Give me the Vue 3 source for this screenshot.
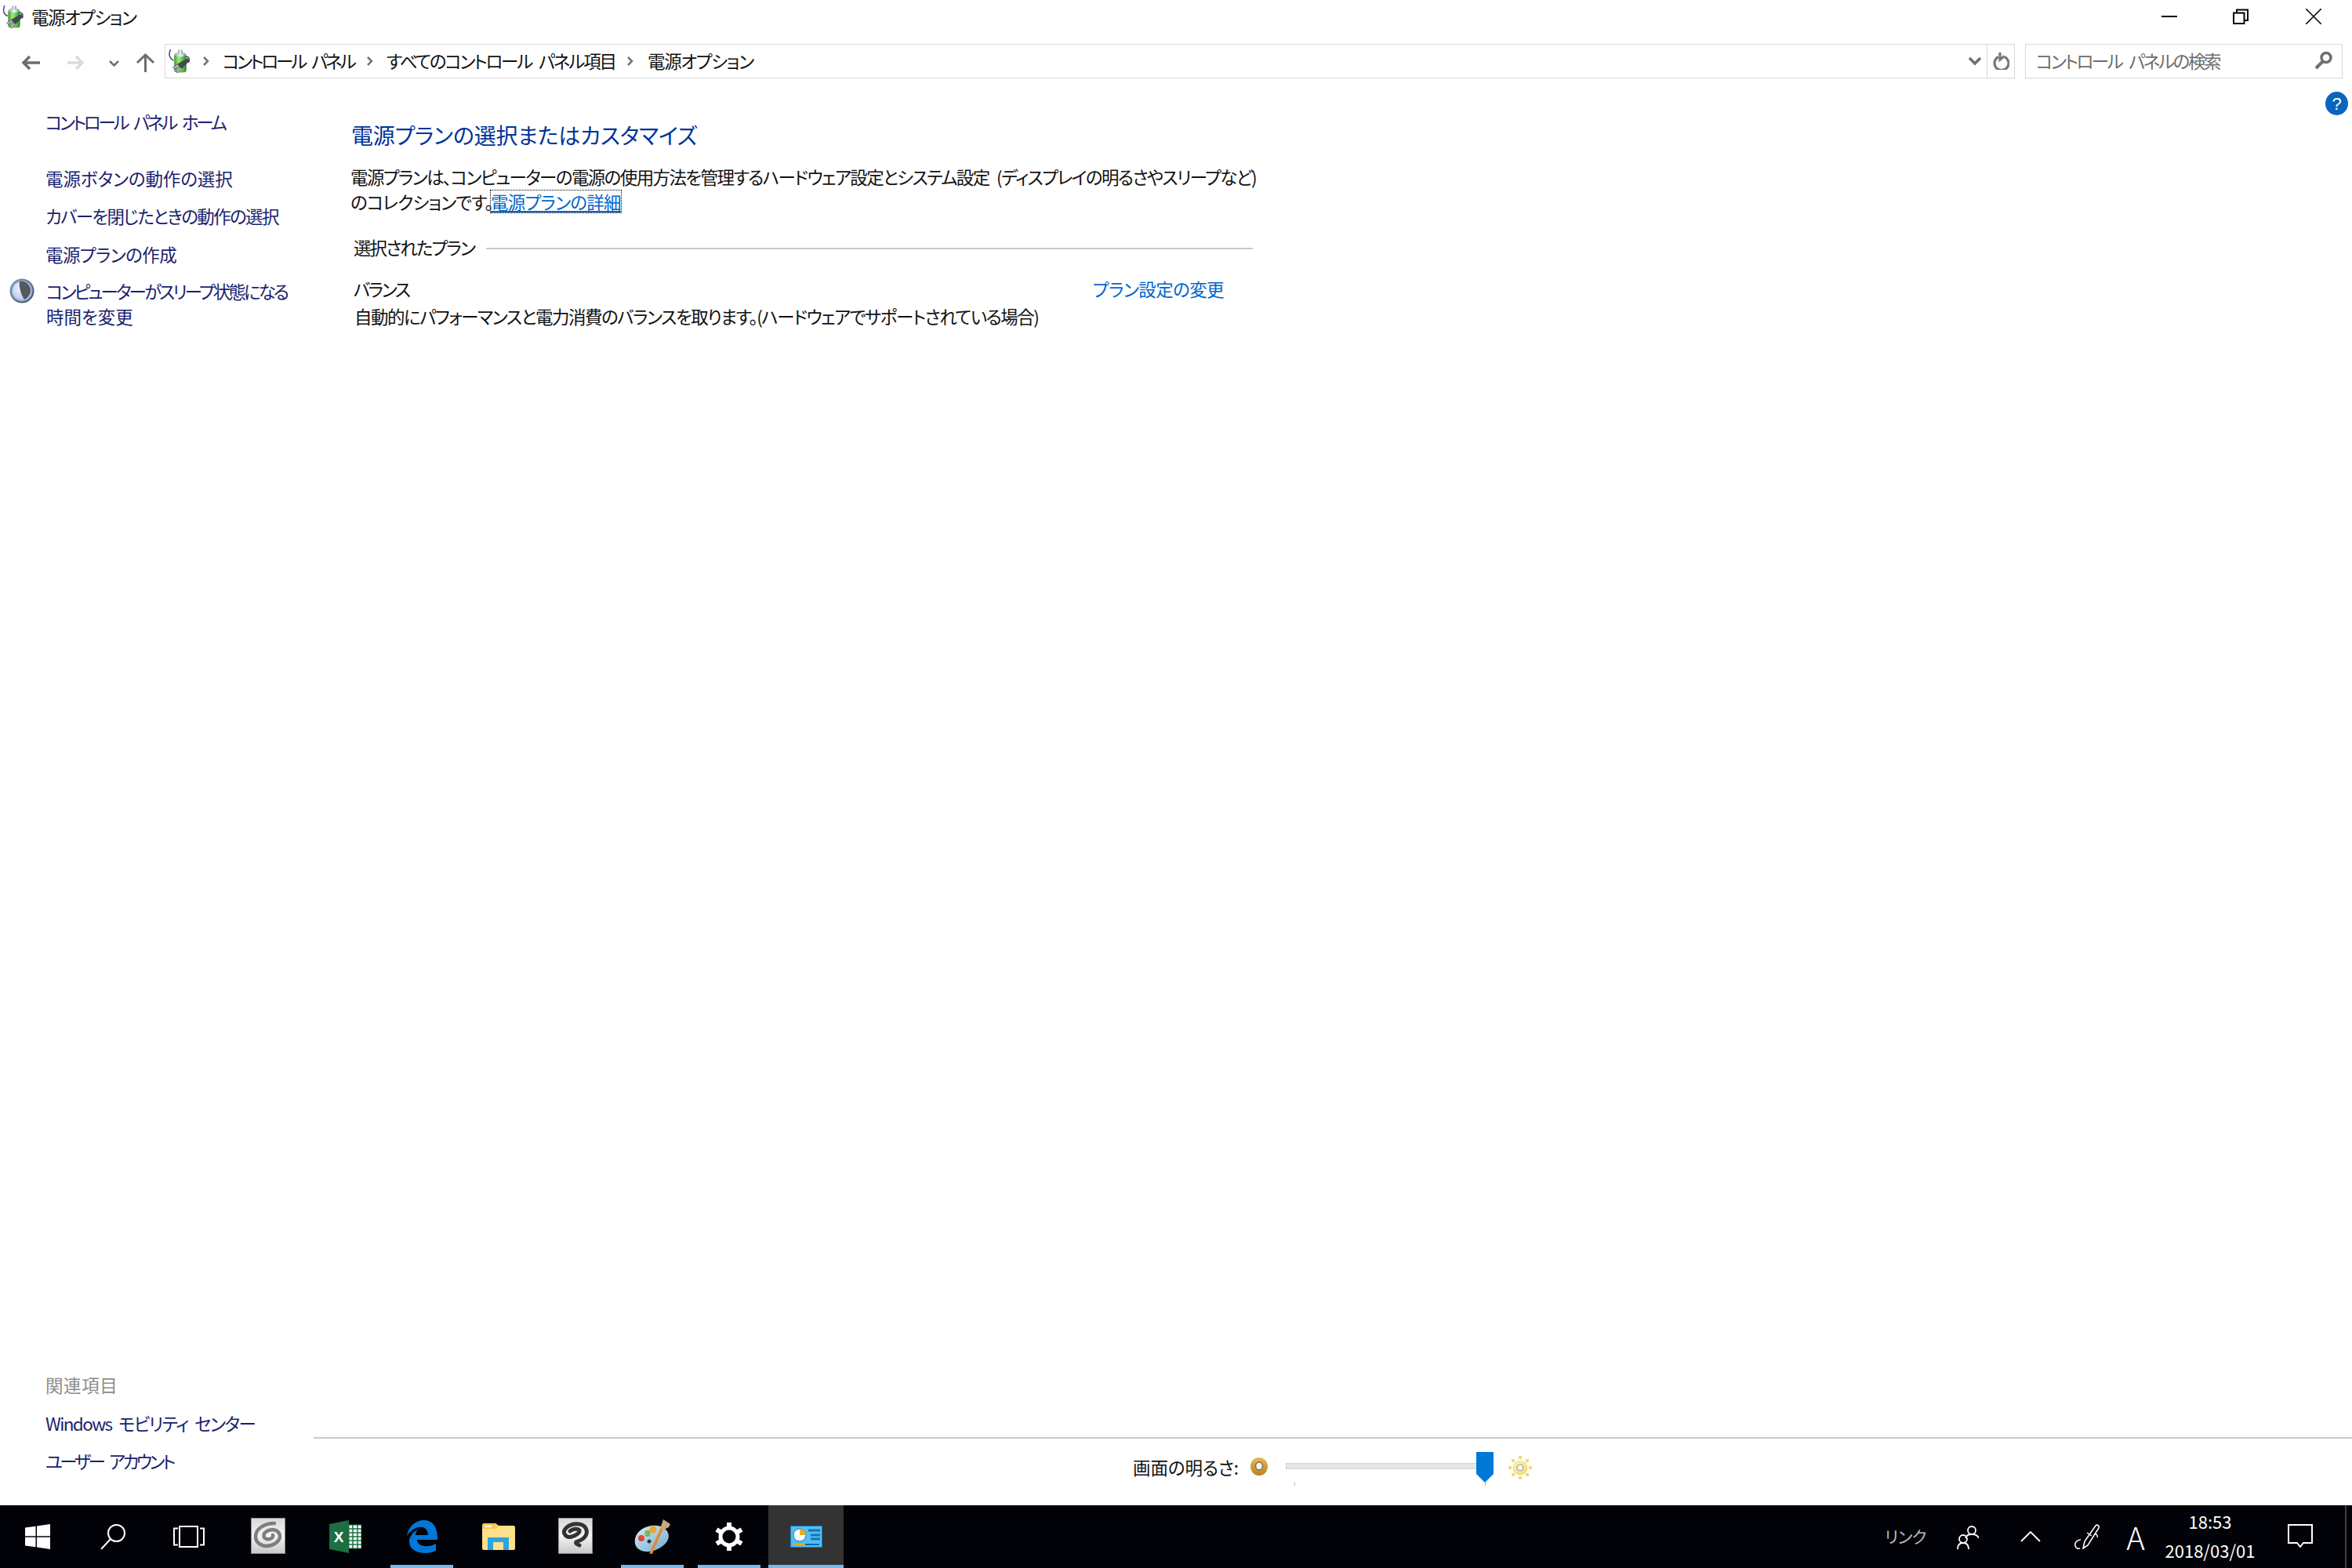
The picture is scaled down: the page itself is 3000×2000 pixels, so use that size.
<script setup>
</script>

<template>
  <div class="page">
    <svg class="defs" width="0" height="0">
      <defs>
        <linearGradient id="batt" x1="0" x2="1" y1="0" y2="0">
          <stop offset="0" stop-color="#3f9e36" />
          <stop offset=".35" stop-color="#a5ec7c" />
          <stop offset=".7" stop-color="#57c548" />
          <stop offset="1" stop-color="#2b8a2d" />
        </linearGradient>
        <linearGradient id="cap" x1="0" x2="1" y1="0" y2="0">
          <stop offset="0" stop-color="#8c9aa0" />
          <stop offset=".5" stop-color="#f2f6f7" />
          <stop offset="1" stop-color="#7f8e94" />
        </linearGradient>
        <linearGradient id="tile" x1="0" x2="0" y1="0" y2="1">
          <stop offset="0" stop-color="#d8d8d8" />
          <stop offset=".5" stop-color="#f4f4f4" />
          <stop offset="1" stop-color="#c8c8c8" />
        </linearGradient>
        <radialGradient id="moon" cx=".4" cy=".4" r=".7">
          <stop offset="0" stop-color="#f0f2ff" />
          <stop offset="1" stop-color="#a9b8e8" />
        </radialGradient>
        <linearGradient id="ring" x1="0" x2="1" y1="0" y2="1">
          <stop offset="0" stop-color="#9aa0a6" />
          <stop offset="1" stop-color="#3f4246" />
        </linearGradient>
        <radialGradient id="sun" cx=".45" cy=".4" r=".7">
          <stop offset="0" stop-color="#fffbe0" />
          <stop offset="1" stop-color="#efd25e" />
        </radialGradient>
        <linearGradient id="dimg" x1="0" x2="0" y1="0" y2="1">
          <stop offset="0" stop-color="#e6b95a" />
          <stop offset="1" stop-color="#b98325" />
        </linearGradient>
        <linearGradient id="pal" x1="0" x2="1" y1="0" y2="1">
          <stop offset="0" stop-color="#d9eef8" />
          <stop offset="1" stop-color="#6ea8cf" />
        </linearGradient>
        <symbol id="power" viewBox="0 0 30 32">
          <path d="M3 1C0 8 2 13 7 15" fill="none" stroke="#4c4c78" stroke-width="1.6" />
          <path d="M22 10C27 10 28 14 26 18" fill="none" stroke="#4c4c78" stroke-width="1.6" />
          <rect x="8" y="7" width="15" height="23" rx="3" fill="url(#batt)" stroke="#2d7f2c" stroke-width=".6" />
          <ellipse cx="15.5" cy="7.5" rx="7.5" ry="3" fill="url(#cap)" />
          <rect x="12.500" y="1" width="6" height="6" rx="2" fill="url(#cap)" />
          <path d="M25 12 27 16 17 26 11 20Z" fill="#44484d" />
          <path d="M12 20 6 24 8 26 14 23M15 24 10 29 12 31 17 26" fill="#b8bcc0" stroke="#3b3e42" stroke-width=".7" />
        </symbol>
        <symbol id="clip" viewBox="0 0 44 46">
          <rect x=".5" y=".5" width="43" height="45" fill="url(#tile)" stroke="#8c8c8c" />
        </symbol>
      </defs>
    </svg>

    <header class="titlebar">
      <svg class="t-icon"><use href="#power" /></svg>
      <span class="t-text">電源オプション</span>
      <div class="winctl">
        <svg class="w-btn" viewBox="0 0 20 20"><path d="M0 10H20" stroke="#000" stroke-width="2" /></svg>
        <svg class="w-btn w-restore" viewBox="0 0 20 20">
          <path d="M1 5.500H14.500V19H1Z M5 5V1.500H19V15H15" fill="none" stroke="#000" stroke-width="2" />
        </svg>
        <svg class="w-btn w-close" viewBox="0 0 20 20"><path d="M0 0 20 20M20 0 0 20" stroke="#000" stroke-width="1.500" /></svg>
      </div>
    </header>

    <nav class="navbar">
      <svg class="n-back" viewBox="0 0 24 20"><path d="M24 10H4M11 2 3 10l8 8" fill="none" stroke="#6d6d6d" stroke-width="3.500" /></svg>
      <svg class="n-fwd" viewBox="0 0 22 20"><path d="M0 10H18M11 2l8 8-8 8" fill="none" stroke="#dcdcdc" stroke-width="3.500" /></svg>
      <svg class="n-drop" viewBox="0 0 13 8"><path d="M1 1 6.500 6.500 12 1" fill="none" stroke="#707070" stroke-width="2.500" /></svg>
      <svg class="n-up" viewBox="0 0 25 24"><path d="M12.500 24V3M2 12 12.500 2 23 12" fill="none" stroke="#6d6d6d" stroke-width="3" /></svg>
      <div class="addr">
        <svg class="a-icon"><use href="#power" /></svg>
        <svg class="crumb-sep first" viewBox="0 0 10 12"><path d="M2 1l5 5-5 5" fill="none" stroke="#757575" stroke-width="2.500" /></svg>
        <span class="crumb c1">コントロール パネル</span>
        <svg class="crumb-sep" viewBox="0 0 10 12"><path d="M2 1l5 5-5 5" fill="none" stroke="#757575" stroke-width="2.500" /></svg>
        <span class="crumb c2">すべてのコントロール パネル項目</span>
        <svg class="crumb-sep" viewBox="0 0 10 12"><path d="M2 1l5 5-5 5" fill="none" stroke="#757575" stroke-width="2.500" /></svg>
        <span class="crumb c3">電源オプション</span>
        <svg class="a-drop" viewBox="0 0 18 12"><path d="M2 2l7 7 7-7" fill="none" stroke="#707070" stroke-width="3.500" /></svg>
        <div class="a-refresh">
          <svg viewBox="0 0 21 22"><path d="M7 5.500A9 9 0 1 0 15 5.500M9 0v9L14.500 4.500" fill="none" stroke="#777" stroke-width="3.200" /></svg>
        </div>
      </div>
      <div class="searchbox">
        <span class="s-text">コントロール パネルの検索</span>
        <svg viewBox="0 0 23 24"><circle cx="15" cy="8.500" r="6" fill="none" stroke="#6f6f6f" stroke-width="3.500" /><path d="M10.500 13.500 2 22" stroke="#6f6f6f" stroke-width="4" /></svg>
      </div>
    </nav>

    <div class="content">
      <aside class="side">
        <a class="lnk home">コントロール パネル ホーム</a>
        <a class="lnk l1">電源ボタンの動作の選択</a>
        <a class="lnk l2">カバーを閉じたときの動作の選択</a>
        <a class="lnk l3">電源プランの作成</a>
        <div class="sleep">
          <svg viewBox="0 0 32 32">
            <circle cx="16" cy="16" r="15.500" fill="url(#ring)" />
            <circle cx="16" cy="16" r="13" fill="url(#moon)" stroke="#6fa2d6" stroke-width="1.500" />
            <path d="M13 4A12 12 0 0 1 27 17C26 22 22 26 19 27 15 21 12 12 13 4Z" fill="#55585c" />
          </svg>
          <a class="lnk"><span class="l4">コンピューターがスリープ状態になる</span><br />時間を変更</a>
        </div>
        <div class="grow"></div>
        <div class="rel">関連項目</div>
        <a class="lnk l5">Windows モビリティ センター</a>
        <a class="lnk l6">ユーザー アカウント</a>
      </aside>

      <main class="main">
        <svg class="help" viewBox="0 0 29 30">
          <ellipse cx="14.500" cy="15" rx="14.500" ry="15" fill="#0a66bd" />
          <text x="14.500" y="23" text-anchor="middle" font-size="22" fill="#fff" font-family="Liberation Sans, sans-serif">?</text>
        </svg>
        <div class="top">
          <h1 class="head">電源プランの選択またはカスタマイズ</h1>
          <p class="para">
            <span class="p1">電源プランは、コンピューターの電源の使用方法を管理するハードウェア設定とシステム設定 (ディスプレイの明るさやスリープなど)</span><br />
            <span class="p2">のコレクションです。</span><a class="detail">電源プランの詳細</a>
          </p>
          <div class="group">
            <span class="g-label">選択されたプラン</span>
            <div class="g-line"></div>
          </div>
          <div class="plan">
            <span class="p-name">バランス</span>
            <a class="p-change">プラン設定の変更</a>
          </div>
          <div class="p-desc">自動的にパフォーマンスと電力消費のバランスを取ります。(ハードウェアでサポートされている場合)</div>
        </div>
        <div class="bright">
          <span class="b-label">画面の明るさ:</span>
          <svg class="b-dim" viewBox="0 0 22 23">
            <ellipse cx="11" cy="11.500" rx="11" ry="11.500" fill="url(#dimg)" />
            <ellipse cx="11" cy="11" rx="4.500" ry="5" fill="#f4f4f2" stroke="#7d6a45" stroke-width="1.500" />
          </svg>
          <div class="slider">
            <div class="track"></div>
            <svg class="thumb" viewBox="0 0 22 39"><path d="M0 0H22V28L11 39 0 28Z" fill="#0078d7" /></svg>
            <i class="tick t1"></i>
            <i class="tick t2"></i>
          </div>
          <svg class="b-sun" viewBox="0 0 32 32">
            <g fill="#f1d96b">
              <circle cx="16" cy="3" r="2.200" /><circle cx="16" cy="29" r="2.200" />
              <circle cx="3" cy="16" r="2.200" /><circle cx="29" cy="16" r="2.200" />
              <circle cx="7" cy="7" r="2.200" /><circle cx="25" cy="7" r="2.200" />
              <circle cx="7" cy="25" r="2.200" /><circle cx="25" cy="25" r="2.200" />
            </g>
            <circle cx="16" cy="16" r="9.500" fill="url(#sun)" />
            <circle cx="16" cy="16" r="4" fill="#f6f4e8" stroke="#9d9d8b" stroke-width="1.200" />
          </svg>
        </div>
      </main>
    </div>

    <footer class="taskbar">
      <div class="tb tb96">
        <svg class="i-win" viewBox="0 0 32 32"><path d="M0 4.500 13.500 2.800V15.300H0ZM15 2.600 32 0V15.300H15ZM0 16.800H13.500V29.200L0 27.500ZM15 16.800H32V32L15 29.400Z" fill="#fff" /></svg>
      </div>
      <div class="tb tb96">
        <svg class="i-search" viewBox="0 0 32 32"><circle cx="20.500" cy="11.500" r="10.500" fill="none" stroke="#fff" stroke-width="2" /><path d="M13 19 1 32" stroke="#fff" stroke-width="2" /></svg>
      </div>
      <div class="tb tb-task">
        <svg class="i-task" viewBox="0 0 40 28"><path d="M8 1H31V27H8ZM6 3.500H1V24.500H6M34 3.500H39V24.500H34" fill="none" stroke="#fff" stroke-width="2" /></svg>
      </div>
      <div class="tb">
        <svg class="i-clip" viewBox="0 0 44 46">
          <use href="#clip" />
          <path d="M30 7C17 7 6 14 6 24c0 9 10 14 20 11 9-3 13-10 10-15-3-6-12-6-17-2-4 3-3 8 1 9 5 1 9-2 8-5" fill="none" stroke="#7e7e7e" stroke-width="4.500" stroke-linecap="round" />
        </svg>
      </div>
      <div class="tb">
        <svg class="i-xl" viewBox="0 0 41 42">
          <path d="M0 5 25 0V42L0 37Z" fill="#1d6f42" />
          <path d="M25 6H41V36H25Z" fill="#fff" stroke="#1d6f42" stroke-width="1" />
          <path d="M30 6V36M36 6V36M25 11H41M25 16H41M25 21H41M25 26H41M25 31H41" stroke="#1d6f42" stroke-width="1.500" />
          <text x="12" y="28" font-size="19" font-weight="700" text-anchor="middle" fill="#fff" font-family="Liberation Sans, sans-serif">X</text>
        </svg>
      </div>
      <div class="tb on">
        <svg class="i-edge" viewBox="0 0 39 42">
          <path d="M0 20C2 8 11 0 22 0 32 0 39 8 39 22V25H13C13 33 26 36 37 30V39C24 45 3 42 3 27 3 21 8 15 14 12 11 16 11 17 11 19H27C27 11 21 8 15 9 9 10 3 15 0 20Z" fill="#0078d7" />
        </svg>
      </div>
      <div class="tb">
        <svg class="i-folder" viewBox="0 0 42 34">
          <path d="M0 4C0 1 1 0 3 0H17L21 3H40C41 3 42 4 42 5V32C42 33 41 34 40 34H2C1 34 0 33 0 32Z" fill="#fde08a" />
          <path d="M0 4C0 1 1 0 3 0H17C20 1 20 5 18 7H0Z" fill="#fcc94e" />
          <rect x="3" y="3" width="9" height="2" fill="#fff" />
          <path d="M7 34V18H34V34H27V24H14V34Z" fill="#2aa5e0" />
        </svg>
      </div>
      <div class="tb">
        <svg class="i-clip" viewBox="0 0 44 46">
          <use href="#clip" />
          <path d="M27 35C22 33 21 31 25 30 34 27 39 20 35 13 31 6 17 6 10 13 4 19 10 26 17 24 22 23 28 19 27 16 25 13 18 14 15 17" fill="none" stroke="#333" stroke-width="5" stroke-linecap="round" />
        </svg>
      </div>
      <div class="tb on">
        <svg class="i-paint" viewBox="0 0 46 46">
          <path d="M1 33C-1 22 8 12 22 10 34 8 44 15 44 23 44 31 36 38 25 42 14 45 3 42 1 33Z" fill="url(#pal)" />
          <circle cx="9" cy="26" r="4" fill="#d94a3d" />
          <rect x="13.500" y="16" width="7" height="8" rx="2" fill="#76b852" />
          <circle cx="24" cy="15" r="4.500" fill="#eda22c" />
          <circle cx="19" cy="30" r="2.500" fill="#2a3440" />
          <path d="M21 46 36 12" stroke="#e8872b" stroke-width="3.500" />
          <path d="M33 14 37 2 46 8 44 12 38 15Z" fill="#c9a878" />
        </svg>
      </div>
      <div class="tb on">
        <svg class="i-gear" viewBox="0 0 36 36">
          <circle cx="18" cy="18" r="11" fill="none" stroke="#fff" stroke-width="5" />
          <g stroke="#fff" stroke-width="6">
            <path d="M18 0V6M18 30V36M2 9 7 12M29 24 34 27M2 27 7 24M29 12 34 9" />
          </g>
        </svg>
      </div>
      <div class="tb active">
        <svg class="i-cp" viewBox="0 0 41 28">
          <rect x=".5" y=".5" width="40" height="27" fill="#4fc0f0" stroke="#1c78b8" />
          <circle cx="12" cy="12" r="8" fill="#fff" stroke="#1c78b8" stroke-width="1" />
          <path d="M12 12V4A8 8 0 0 1 20 12Z" fill="#f5a623" />
          <path d="M23 6H38M26 12H38M26 17H38" stroke="#1d6fb0" stroke-width="3" />
          <path d="M5 24H19" stroke="#f5a623" stroke-width="2" />
          <path d="M19 24H37" stroke="#0f65ad" stroke-width="2" />
        </svg>
      </div>

      <div class="tray">
        <span class="tr-link">リンク</span>
        <svg class="tr-people" viewBox="0 0 28 31">
          <circle cx="19" cy="7" r="5" fill="none" stroke="#fff" stroke-width="1.800" />
          <path d="M11 17C12 13 15 12 19 12 24 12 27 14 28 17" fill="none" stroke="#fff" stroke-width="1.800" />
          <circle cx="8" cy="18" r="5" fill="none" stroke="#fff" stroke-width="1.800" />
          <path d="M1 31C1 25 4 23 8 23 12 23 15 25 15 31" fill="none" stroke="#fff" stroke-width="1.800" />
        </svg>
        <svg class="tr-caret" viewBox="0 0 26 14"><path d="M1 13 13 1 25 13" fill="none" stroke="#fff" stroke-width="1.800" /></svg>
        <svg class="tr-pen" viewBox="0 0 32 32">
          <path d="M11 31 13 22 27 2C29 0 32 2 31 5L17 27Z" fill="none" stroke="#fff" stroke-width="1.600" />
          <path d="M16 11 22 15M25 13C29 12 30 15 29 17" fill="none" stroke="#fff" stroke-width="1.500" />
          <path d="M8 20C3 20 0 24 1 28 2 31 5 32 7 31" fill="none" stroke="#fff" stroke-width="1.600" />
        </svg>
        <span class="tr-a">A</span>
        <div class="clock"><span>18:53</span><span>2018/03/01</span></div>
        <svg class="tr-note" viewBox="0 0 32 32"><path d="M1 1H31V24H20L16 29 12 24H1Z" fill="none" stroke="#fff" stroke-width="2" /></svg>
        <div class="tr-edge"></div>
      </div>
    </footer>
  </div>
</template>

<style>
html, body { margin: 0; background: #fff; }
</style>

<style scoped>
.page {
  width: 3000px;
  height: 2000px;
  display: flex;
  flex-direction: column;
  overflow: hidden;
  background: #fff;
  font-family: "Noto Sans CJK JP", "Noto Sans", sans-serif;
  font-feature-settings: "palt";
  font-size: 22.5px;
  color: #111;
}
.defs { position: absolute; }
svg { display: block; flex: none; }
a { display: block; }

.titlebar { height: 44px; flex: none; display: flex; align-items: center; padding-left: 3px; }
.t-icon { width: 29px; height: 31px; margin-top: -1px; }
.t-text { margin: 0 0 3px 8px; letter-spacing: -1.5px; }
.winctl { margin-left: auto; display: flex; align-items: center; margin-right: 39px; }
.w-btn { width: 20px; height: 20px; margin-top: -2px; }
.w-restore { margin-left: 71px; }
.w-close { margin-left: 73px; }

.navbar { height: 56px; flex: none; display: flex; align-items: flex-start; padding-left: 27px; }
.n-back { width: 24px; height: 20px; margin-top: 26px; }
.n-fwd { width: 22px; height: 20px; margin: 26px 0 0 35px; }
.n-drop { width: 13px; height: 8px; margin: 33px 0 0 31px; }
.n-up { width: 25px; height: 24px; margin: 24px 0 0 21px; }
.addr {
  width: 2360px;
  height: 44px;
  margin: 12px 0 0 12px;
  box-sizing: border-box;
  border: 1.500px solid #d9d9d9;
  border-left-width: 1px;
  border-right-width: 1px;
  display: flex;
  align-items: center;
  padding-left: 3px;
}
.a-icon { width: 31px; height: 32px; }
.crumb-sep { width: 10px; height: 12px; }
.first { margin-left: 13px; }
.crumb { margin: 0 14px 3px 16px; white-space: nowrap; }
.c1 { width: 169px; letter-spacing: -3.100px; word-spacing: 6px; }
.c2 { width: 292px; letter-spacing: -2.200px; word-spacing: 6px; }
.c3 { width: 133px; letter-spacing: -1.300px; margin-left: 17px; }
.a-drop { width: 18px; height: 12px; margin-left: auto; }
.a-refresh { width: 34px; height: 100%; margin-left: 6px; border-left: 1px solid #d9d9d9; display: flex; align-items: center; justify-content: center; }
.a-refresh svg { width: 21px; height: 22px; }
.searchbox {
  width: 405px;
  height: 44px;
  margin: 12px 0 0 13px;
  box-sizing: border-box;
  border: 1.500px solid #d9d9d9;
  border-width: 1.500px 1px;
  display: flex;
  align-items: center;
  padding: 0 12px 0 13px;
  color: #6d6d6d;
}
.s-text { white-space: nowrap; letter-spacing: -2.400px; word-spacing: 6px; margin-bottom: 3px; }
.searchbox svg { width: 23px; height: 24px; margin-left: auto; margin-top: -3px; }

.content { flex: 1; display: flex; min-height: 0; }
.side { width: 400px; flex: none; display: flex; flex-direction: column; box-sizing: border-box; padding: 39px 0 41px 58px; }
.lnk { line-height: 32px; color: #1a1f6e; white-space: nowrap; }
.home { letter-spacing: -3.260px; word-spacing: 6px; }
.l1 { margin-top: 40px; letter-spacing: -.1px; }
.l2 { margin-top: 16px; letter-spacing: -1.650px; }
.l3 { margin-top: 17px; letter-spacing: -.6px; }
.sleep { display: flex; align-items: flex-start; margin: 15px 0 0 -46px; }
.sleep svg { width: 32px; height: 32px; margin: 0 15px 0 0; }
.l4 { letter-spacing: -2.900px; }
.grow { flex: 1; }
.rel { line-height: 32px; color: #8c8c8c; letter-spacing: .6px; }
.l5 { margin-top: 17px; letter-spacing: -1.600px; word-spacing: 5px; }
.l6 { margin-top: 16px; letter-spacing: -3.500px; word-spacing: 6px; }

.main { flex: 1; position: relative; display: flex; flex-direction: column; min-width: 0; }
.help { position: absolute; left: 2566px; top: 17px; width: 29px; height: 30px; }
.top { flex: 1; padding: 52px 0 0 47px; min-height: 0; }
.head { margin: 0 0 0 1px; font-size: 28px; font-weight: 400; line-height: 40px; color: #003399; white-space: nowrap; letter-spacing: -.2px; }
.para { margin: 17px 0 0; line-height: 32px; white-space: nowrap; }
.p1 { letter-spacing: -1.600px; word-spacing: 6px; }
.p2 { display: inline-block; width: 177px; letter-spacing: -.9px; }
.detail { display: inline-block; color: #0066cc; text-decoration: underline; outline: 1px dotted #000; outline-offset: 0; line-height: 28px; margin-left: 2px; letter-spacing: -.75px; }
.group { display: flex; align-items: center; margin: 26px 0 0 4px; width: 1147px; line-height: 32px; }
.g-label { white-space: nowrap; letter-spacing: -1.900px; margin-bottom: 3px; }
.g-line { flex: 1; height: 2px; background: #c8c8c8; margin-left: 15px; }
.plan { display: flex; margin: 18px 0 0 4px; width: 1110px; line-height: 32px; justify-content: space-between; }
.p-name { letter-spacing: -2.500px; }
.p-change { color: #0066cc; letter-spacing: -.6px; }
.p-desc { margin: 3px 0 0 5px; line-height: 32px; white-space: nowrap; letter-spacing: -1.470px; }

.bright { height: 87px; flex: none; box-sizing: border-box; border-top: 2px solid #c8c8c8; display: flex; align-items: flex-start; padding-left: 1045px; margin-top: -1px; }
.b-label { margin-top: 20px; line-height: 32px; white-space: nowrap; width: 136px; letter-spacing: -.1px; }
.b-dim { width: 22px; height: 23px; margin: 24px 0 0 14px; }
.slider { position: relative; width: 265px; height: 60px; margin: 17px 0 0 23px; }
.track { position: absolute; left: 0; right: 0; top: 14px; background: #e3e6e8; border: 1px solid #d2d5d7; height: 6px; }
.thumb { position: absolute; left: 243px; top: 0; width: 22px; height: 39px; }
.tick { position: absolute; top: 39px; width: 1px; height: 4px; background: #b5b5b5; }
.t1 { left: 11px; }
.t2 { left: 254px; }
.b-sun { width: 32px; height: 32px; margin: 21px 0 0 18px; }

.taskbar { height: 80px; flex: none; background: #020308; display: flex; color: #fff; }
.tb { width: 98px; height: 80px; box-sizing: border-box; flex: none; display: flex; align-items: center; justify-content: center; position: relative; }
.tb96 { width: 96px; }
.tb-task { width: 101px; padding-right: 4px; }
.on::after { content: ""; position: absolute; left: 9px; right: 9px; bottom: 0; height: 4px; background: #76b9ed; }
.active { background: #333; width: 96px; margin-left: 1px; }
.active::after { content: ""; position: absolute; left: 0; right: 0; bottom: 0; height: 4px; background: #76b9ed; }
.i-win { width: 32px; height: 32px; }
.i-search { width: 32px; height: 32px; }
.i-task { width: 40px; height: 28px; }
.i-clip { width: 44px; height: 46px; margin-bottom: 2px; }
.i-xl { width: 41px; height: 42px; }
.i-edge { width: 39px; height: 42px; }
.i-folder { width: 42px; height: 34px; }
.i-paint { width: 46px; height: 46px; margin-bottom: 2px; }
.i-gear { width: 36px; height: 36px; }
.i-cp { width: 41px; height: 28px; }

.tray { margin-left: auto; display: flex; align-items: center; height: 80px; }
.tr-link { font-size: 21px; color: #bdbdbd; width: 51px; white-space: nowrap; letter-spacing: -.6px; margin-bottom: 3px; }
.tr-people { width: 28px; height: 31px; margin-left: 41px; }
.tr-caret { width: 26px; height: 14px; margin-left: 53px; }
.tr-pen { width: 32px; height: 32px; margin-left: 43px; }
.tr-a { font-size: 40px; font-weight: 300; line-height: 40px; width: 22px; margin-left: 35px; display: flex; justify-content: center; }
.clock { width: 118px; margin: 0 0 2px 25px; display: flex; flex-direction: column; align-items: center; font-size: 22px; line-height: 37px; }
.tr-note { width: 32px; height: 32px; margin-left: 40px; }
.tr-edge { width: 2px; height: 80px; background: #3e3e3e; margin-left: 41px; margin-right: 7px; }
</style>
